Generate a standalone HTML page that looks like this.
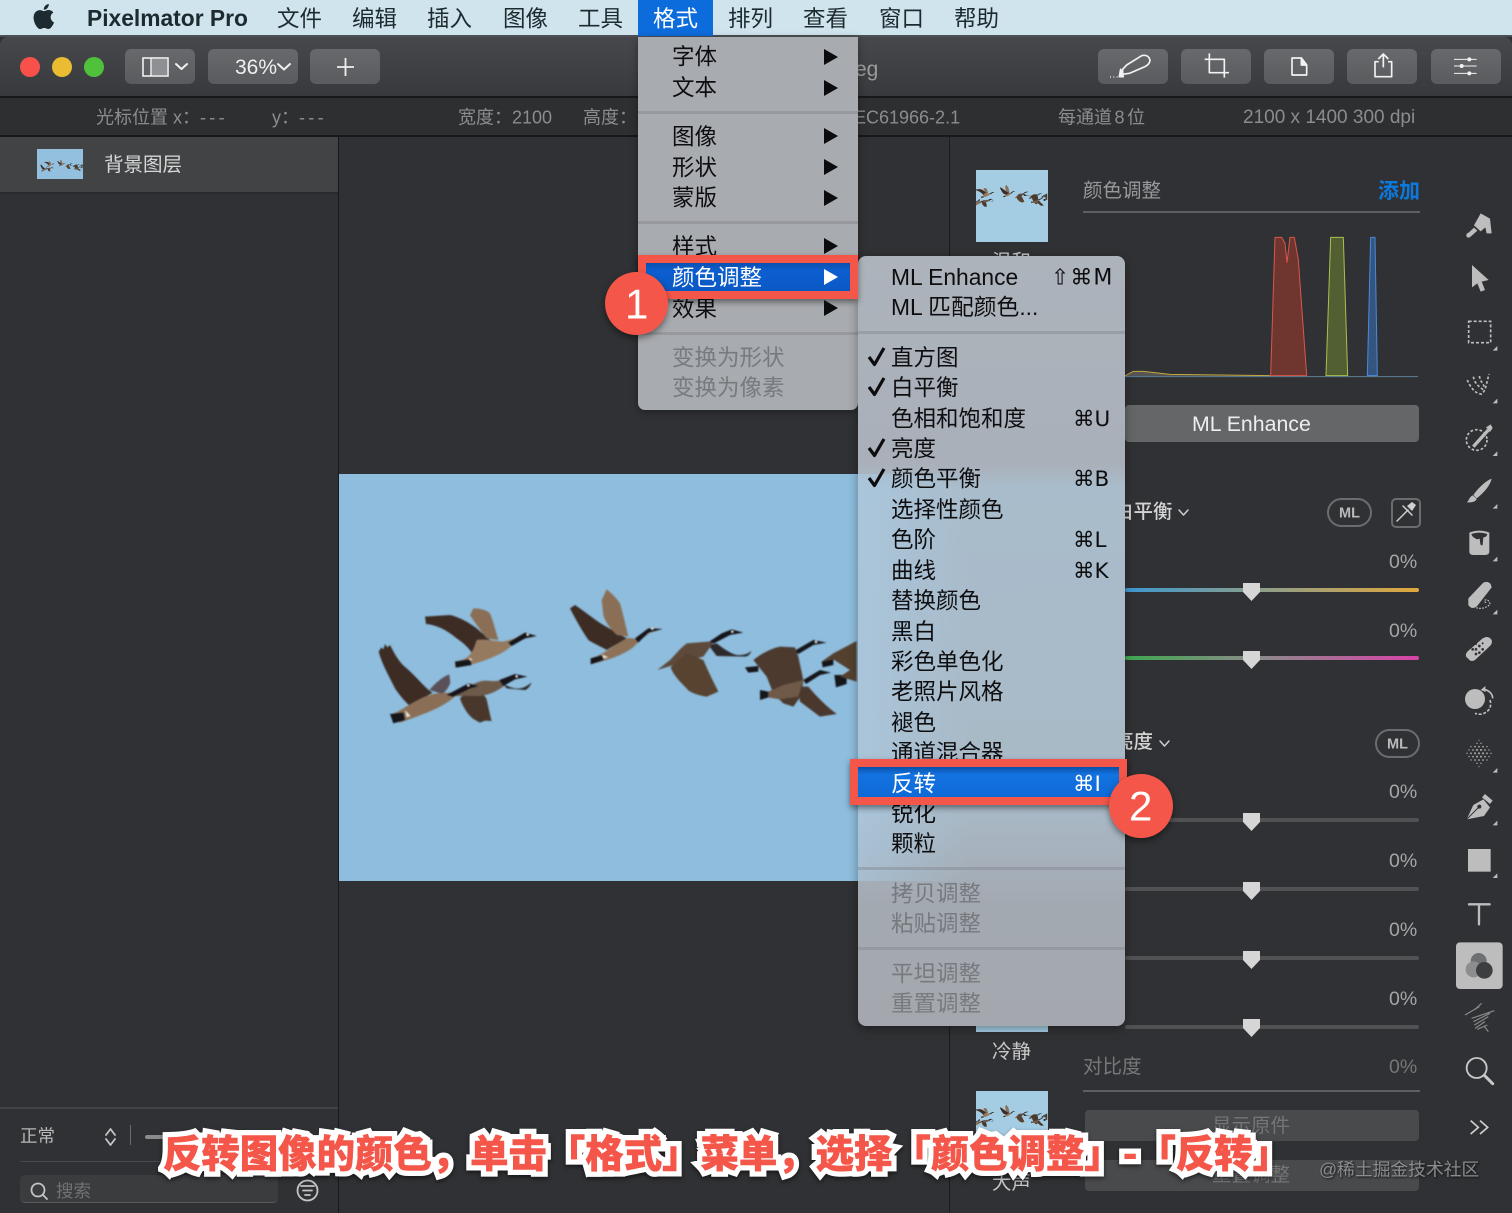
<!DOCTYPE html>
<html lang="zh"><head><meta charset="utf-8"><title>Pixelmator Pro</title>
<style>
html,body{margin:0;padding:0;background:#2f3032}
#p{position:relative;width:1512px;height:1213px;overflow:hidden;background:#303134;font-family:"Liberation Sans","Noto Sans CJK SC",sans-serif}
.a{position:absolute}
.t{position:absolute;white-space:nowrap;line-height:1;transform:translateY(calc(-50% + 1.5px))}
.mb{font-size:22.5px;color:#1d2a30;top:18px}
.s{font-size:18px;color:#8b8c8e;top:116px}
.btn{position:absolute;top:49px;height:35px;border-radius:6px;background:linear-gradient(#67696c,#595b5e)}
.m{font-size:22.5px;color:#0e0e10}
.k{font-family:"DejaVu Sans","Liberation Sans",sans-serif;font-size:21.5px;left:1073px}
.d{color:#777a7e}
.pc{font-size:19.500px;color:#a5a6a7;left:1389px}
.tr{position:absolute;left:1125px;width:294px;height:4px;border-radius:2px;background:#515254}
.sep{position:absolute;height:3px;background:rgba(125,128,134,.4)}
.ds{letter-spacing:3.300px}
.cap{left:163px;top:1150px;font-size:38.400px;font-weight:900;color:#f4574a;font-family:"Noto Sans CJK SC",sans-serif}
</style></head><body><div id="p">

<!-- menu bar -->
<div class="a" style="left:0;top:0;width:1512px;height:36px;background:#cfe4ed"></div>
<div class="a" style="left:0;top:35px;width:1512px;height:2px;background:#4a5054"></div>
<span class="t" style="left:87px;top:17px;font-size:22.800px;font-weight:bold;color:#1d2a30">Pixelmator Pro</span>
<span class="t mb" style="left:277px">文件</span><span class="t mb" style="left:352px">编辑</span><span class="t mb" style="left:427px">插入</span><span class="t mb" style="left:503px">图像</span><span class="t mb" style="left:578px">工具</span><span class="t mb" style="left:728px">排列</span><span class="t mb" style="left:803px">查看</span><span class="t mb" style="left:879px">窗口</span><span class="t mb" style="left:954px">帮助</span>

<!-- toolbar -->
<div class="a" style="left:0;top:37px;width:1512px;height:60px;border-radius:8px 8px 0 0;background:linear-gradient(#46484b,#37393c)"></div>
<div class="a" style="left:0;top:96px;width:1512px;height:2px;background:#17181a"></div>
<div class="a" style="left:0;top:98px;width:1512px;height:37px;background:#2e2f31"></div>
<div class="a" style="left:0;top:135px;width:1512px;height:2px;background:#17181a"></div>
<div class="a" style="left:20px;top:57px;width:20px;height:20px;border-radius:50%;background:#f8514c"></div>
<div class="a" style="left:52px;top:57px;width:20px;height:20px;border-radius:50%;background:#e9bc32"></div>
<div class="a" style="left:84px;top:57px;width:20px;height:20px;border-radius:50%;background:#50c13b"></div>
<div class="btn" style="left:125px;width:70px"></div>
<div class="btn" style="left:208px;width:90px"></div>
<div class="btn" style="left:310px;width:70px"></div>
<div class="btn" style="left:1098px;width:70px"></div>
<div class="btn" style="left:1181px;width:70px"></div>
<div class="btn" style="left:1264px;width:70px"></div>
<div class="btn" style="left:1347px;width:70px"></div>
<div class="btn" style="left:1431px;width:70px"></div>
<span class="t" style="left:235px;top:66px;font-size:21px;color:#f0f0f0">36%</span>
<span class="t" style="left:855px;top:68px;font-size:21px;color:#9a9b9c">eg</span>

<!-- status -->
<span class="t s" style="left:96px">光标位置 x：<span class="ds">---</span></span>
<span class="t s" style="left:272px">y：<span class="ds">---</span></span>
<span class="t s" style="left:458px">宽度：2100</span>
<span class="t s" style="left:583px">高度：</span>
<span class="t s" style="left:854px">EC61966-2.1</span>
<span class="t s" style="left:1058px;word-spacing:-2.500px">每通道 8 位</span>
<span class="t s" style="left:1243px;font-size:19px">2100 x 1400 300 dpi</span>

<!-- left panel -->
<div class="a" style="left:0;top:137px;width:338px;height:1076px;background:#303134"></div>
<div class="a" style="left:0;top:137px;width:338px;height:55px;background:#424345"></div>
<div class="a" style="left:338px;top:137px;width:1px;height:1076px;background:#17181a"></div>
<div class="a" style="left:949px;top:137px;width:1px;height:1076px;background:#1b1c1e"></div>
<div class="a" style="left:0;top:192px;width:338px;height:2px;background:#2a2b2d"></div>
<span class="t" style="left:104px;top:164px;font-size:19.500px;color:#d8d8d8">背景图层</span>
<div class="a" style="left:0;top:1107px;width:338px;height:2px;background:#424345"></div>
<span class="t" style="left:20px;top:1135px;font-size:17.500px;color:#b8b8b8">正常</span>
<div class="a" style="left:130px;top:1125px;width:1px;height:20px;background:#6a6b6d"></div>
<div class="a" style="left:145px;top:1135px;width:40px;height:4px;background:#8a8b8c;border-radius:2px"></div>
<div class="a" style="left:20px;top:1161px;width:300px;height:1px;background:#47484a"></div>
<div class="a" style="left:20px;top:1175px;width:258px;height:28px;border-radius:5px;background:#3b3c3e;border-bottom:1px solid #5a5b5d;box-sizing:border-box"></div>
<span class="t" style="left:56px;top:1190px;font-size:17.500px;color:#707173">搜索</span>

<!-- canvas image -->
<div class="a" style="left:339px;top:474px;width:520px;height:407px;background:#8fbddd"></div>

<!-- right panel -->
<div class="a" style="left:976px;top:170px;width:72px;height:72px;background:#a4cde4"></div>
<div class="a" style="left:976px;top:1010px;width:72px;height:22px;background:#a4cde4"></div>
<div class="a" style="left:976px;top:1091px;width:72px;height:60px;background:#a4cde4"></div>
<span class="t" style="left:992px;top:1051px;font-size:19.500px;color:#c8c8c8">冷静</span>
<span class="t" style="left:992px;top:1182px;font-size:19.500px;color:#c8c8c8">大声</span>
<span class="t" style="left:992px;top:261px;font-size:19.500px;color:#c8c8c8">温和</span>
<span class="t" style="left:1083px;top:190px;font-size:19.500px;color:#98999b">颜色调整</span>
<span class="t" style="left:1378px;top:190px;font-size:21px;font-weight:bold;color:#0b79de">添加</span>
<div class="a" style="left:1083px;top:211px;width:337px;height:2px;background:#5e5f61"></div>
<div class="a" style="left:1125px;top:405px;width:294px;height:37px;border-radius:4px;background:#646668"></div>
<span class="t" style="left:1192px;top:423px;font-size:21.300px;color:#eee">ML Enhance</span>

<span class="t" style="left:1114px;top:511px;font-size:19.500px;color:#d4d4d4;font-weight:500">白平衡</span>
<span class="t" style="left:1114px;top:741px;font-size:19.500px;color:#d4d4d4;font-weight:500">亮度</span>
<div class="a" style="left:1327px;top:498px;width:45px;height:29px;border:2px solid #6b6c6e;border-radius:15px;box-sizing:border-box"></div>
<span class="t" style="left:1339px;top:512px;font-size:14.500px;font-weight:bold;color:#bbb">ML</span>
<div class="a" style="left:1391px;top:498px;width:30px;height:30px;border:2px solid #6b6c6e;border-radius:5px;box-sizing:border-box"></div>
<div class="a" style="left:1375px;top:729px;width:45px;height:29px;border:2px solid #6b6c6e;border-radius:15px;box-sizing:border-box"></div>
<span class="t" style="left:1387px;top:743px;font-size:14.500px;font-weight:bold;color:#bbb">ML</span>

<span class="t pc" style="top:561px">0%</span><span class="t pc" style="top:630px">0%</span><span class="t pc" style="top:791px">0%</span><span class="t pc" style="top:860px">0%</span><span class="t pc" style="top:929px">0%</span><span class="t pc" style="top:998px">0%</span><span class="t pc" style="top:1066px;color:#777">0%</span>
<div class="tr" style="top:588px;background:linear-gradient(90deg,#3d98cf,#8a9d8d 45%,#e0a83c)"></div>
<div class="tr" style="top:656px;background:linear-gradient(90deg,#3fa84e,#8b8b8b 45%,#d843a8)"></div>
<div class="tr" style="top:818px"></div><div class="tr" style="top:887px"></div><div class="tr" style="top:956px"></div><div class="tr" style="top:1025px"></div>
<span class="t" style="left:1083px;top:1066px;font-size:19.500px;color:#77787a">对比度</span>
<div class="a" style="left:1083px;top:1090px;width:337px;height:2px;background:#5e5f61"></div>
<div class="a" style="left:1085px;top:1110px;width:334px;height:31px;border-radius:4px;background:#494a4c"></div>
<div class="a" style="left:1085px;top:1160px;width:334px;height:31px;border-radius:4px;background:#494a4c"></div>
<span class="t" style="left:1212px;top:1125px;font-size:19.500px;color:#747577">显示原件</span>
<span class="t" style="left:1212px;top:1174px;font-size:19.500px;color:#747577">重置调整</span>

<!-- base vector layer -->
<svg class="a" style="left:0;top:0" width="1512" height="1213" viewBox="0 0 1512 1213">
<defs>
<g id="geese">
<g fill="#3c2c24">
<path d="M116 275L124 262L130 268L135 252L142 262L150 255C165 285 180 310 200 325C230 350 255 385 278 398C255 412 230 425 208 436C190 420 175 400 165 385C145 345 125 310 116 275Z"/>
<path d="M268 390C285 370 305 352 328 343L331 368C325 385 315 395 308 402Z" fill="#5a5058"/>
<path d="M360 415C375 400 390 388 400 385C420 395 435 405 440 418C445 440 450 465 455 483L435 482L420 488C405 480 395 475 385 462C372 445 365 430 360 415Z" fill="#4a372c"/>
<path d="M255 170L330 165C360 172 390 190 410 205L450 240L400 285C385 260 365 245 350 235C320 210 290 195 258 192Z"/>
<path d="M690 145L705 135C735 155 765 180 790 195L860 235L800 270C780 258 760 250 745 240C725 210 705 175 690 145Z"/>
<path d="M1105 255L1130 250C1150 265 1170 280 1190 285C1210 287 1225 282 1235 272C1230 285 1222 290 1215 290L1130 288Z" fill="#2e2a2c"/>
<path d="M490 372C505 380 525 388 540 385C555 383 565 375 575 367C570 380 562 388 555 390L500 385Z" fill="#2e2a2c"/>
</g>
<g fill="#8a6f56">
<path d="M390 165L400 145C420 145 440 150 450 160C460 185 468 215 475 240L440 235C425 215 405 190 390 165Z"/>
<path d="M785 120L800 88C815 100 830 115 840 130C850 165 858 200 865 230L830 225C810 205 795 185 790 165Z"/>
<path d="M345 305C380 298 395 290 410 240C440 235 470 245 490 245L525 235L555 218L590 228L555 235L520 252C500 275 460 295 400 312L345 322Z" fill="#957a60"/>
<path d="M752 295C790 285 830 250 860 235C880 232 885 240 890 235L925 205L968 207L930 218L895 245C880 270 830 295 755 312Z" fill="#8d7258"/>
<path d="M150 465C190 450 230 415 270 405C300 395 320 402 345 395L385 372L412 378L385 385C360 395 345 410 325 425C290 450 230 470 180 488Z"/>
<path d="M952 330L990 300C1005 285 1020 265 1040 250L1105 245L1120 248L1090 290L1050 300Z" fill="#5e4a3b"/>
<path d="M992 322C1010 305 1025 292 1040 280L1090 300C1105 335 1120 365 1135 395L1100 410C1070 405 1045 395 1040 385C1020 365 1000 345 992 322Z" fill="#57432f"/>
<path d="M340 408C370 390 410 360 440 362C465 365 480 362 490 358L492 378C470 395 445 405 420 408Z" fill="#6e5a49"/>
</g>
<g fill="#15151a">
<path d="M320 405L385 370L415 378L390 385L340 410Z"/><path d="M478 360L525 342L562 350L525 358L490 378Z"/>
<path d="M505 248L555 218L590 228L555 235L515 258Z"/><path d="M885 235L925 205L968 207L925 218L895 248Z"/>
<path d="M1108 245L1145 220L1175 208L1210 218L1170 225L1122 250Z"/><path d="M1365 272L1420 240L1460 248L1420 255L1375 282Z"/>
<path d="M1390 360L1440 330L1473 338L1440 345L1398 372Z"/>
<path d="M150 462L190 458L195 480L160 490Z"/><path d="M345 305L390 298L395 315L348 323Z"/><path d="M752 295L790 285L790 300L752 313Z"/>
<path d="M1215 322L1255 318L1255 335L1225 338Z"/><path d="M1445 305L1480 298L1480 315L1448 322Z"/><path d="M1483 345L1520 345L1520 372L1488 382Z"/><path d="M1260 390L1285 395L1285 412L1260 420Z"/>
</g>
<g fill="#e8e2d8"><circle cx="385" cy="376" r="4"/><circle cx="530" cy="349" r="4"/><circle cx="563" cy="224" r="4"/><circle cx="937" cy="206" r="4"/><circle cx="1177" cy="215" r="4"/><circle cx="1428" cy="246" r="4"/><path d="M195 450L212 468L200 472Z"/><path d="M388 292L398 300L388 302Z"/><path d="M785 283L805 292L790 296Z"/></g>
<path d="M1240 300C1265 280 1295 265 1320 260L1365 262L1375 290L1390 360L1385 405L1360 440L1330 430L1300 400L1280 350Z" fill="#4c3a2f"/>
<path d="M1375 380L1405 380C1430 410 1460 440 1490 462L1440 470L1380 425Z" fill="#4a382d"/>
<path d="M1285 395L1330 375L1390 360L1375 410L1320 418L1285 412Z" fill="#6f5947"/>
<path d="M1445 305L1480 280L1550 243L1550 365L1500 350L1530 330L1480 298Z" fill="#54402f"/>
</g>
</defs>
<g style="filter:blur(.7px)">
<g transform="translate(340 560) scale(.33333)"><use href="#geese"/></g>
</g>
<!-- thumbs -->
<clipPath id="c1"><rect x="976" y="170" width="72" height="72"/></clipPath>
<clipPath id="c2"><rect x="976" y="1091" width="72" height="60"/></clipPath>
<clipPath id="c3"><rect x="37" y="149" width="46" height="30"/></clipPath>
<rect x="37" y="149" width="46" height="30" fill="#93c0de"/>
<g clip-path="url(#c3)"><g transform="translate(37 157) scale(.0295)"><use href="#geese"/></g></g>
<g clip-path="url(#c1)"><g transform="translate(962 180) scale(.055)"><use href="#geese"/></g></g>
<g clip-path="url(#c2)"><g transform="translate(962 1100) scale(.055)"><use href="#geese"/></g></g>

<!-- apple -->
<path transform="translate(29 2) scale(1.27)" fill="#1d2a30" d="M17.05 12.04c-.03-2.5 2.04-3.7 2.13-3.76-1.16-1.7-2.97-1.93-3.61-1.96-1.54-.16-3 .9-3.78.9-.78 0-1.98-.88-3.26-.86-1.68.03-3.22.98-4.09 2.48-1.74 3.03-.45 7.5 1.25 9.95.83 1.2 1.82 2.55 3.12 2.5 1.25-.05 1.73-.81 3.24-.81 1.51 0 1.94.81 3.27.78 1.35-.02 2.2-1.22 3.02-2.43.95-1.39 1.34-2.74 1.37-2.81-.03-.01-2.63-1.01-2.66-4zM14.56 4.7c.69-.84 1.16-2 1.03-3.17-1 .04-2.2.67-2.91 1.5-.64.74-1.2 1.92-1.05 3.06 1.11.09 2.25-.57 2.93-1.39z"/>

<!-- toolbar left icons -->
<rect x="143" y="58" width="25" height="18" fill="none" stroke="#f0f0f0" stroke-width="1.600"/>
<rect x="151" y="59" width="16" height="16" fill="#8e9093"/><path d="M151 58V76" stroke="#f0f0f0" stroke-width="1.400"/>
<g fill="none" stroke="#f0f0f0" stroke-width="2" stroke-linecap="round" stroke-linejoin="round">
<path d="M176 64L181.500 69L187 64"/><path d="M278 64L284 69.500L290 64"/>
</g>
<path d="M337 67H354M345.500 58V76" stroke="#f0f0f0" stroke-width="1.800"/>

<!-- toolbar right icons -->
<g transform="translate(1080 30) scale(.33333)" fill="none" stroke="#f2f2f2" stroke-width="5" stroke-linejoin="round">
<path d="M128 118L140 105L185 77Q205 72 210 90Q210 102 195 110L148 130L128 133Z"/>
<path d="M122 118L130 140L118 140Z" fill="#f2f2f2"/>
<path d="M90 141H93M100 141H103M110 141H113" stroke-width="4"/>
<path d="M388 70V128H447M374 88H433V143"/>
<path d="M636 84H664L680 105V135H636Z"/><path d="M664 84L680 105H664Z" fill="#f2f2f2"/>
<path d="M896 95H885V140H935V95H924M910 112V72M895 87L910 72L925 87"/>
<path d="M1122 88H1190M1122 108H1190M1122 130H1190" stroke-width="3"/>
<circle cx="1168" cy="88" r="6" fill="#f2f2f2" stroke="none"/><circle cx="1145" cy="108" r="6" fill="#f2f2f2" stroke="none"/><circle cx="1168" cy="130" r="6" fill="#f2f2f2" stroke="none"/>
</g>

<!-- histogram -->
<g transform="translate(1080 30) scale(.33333)">
<path d="M572 1037L585 622H605L615 640L621 698L630 622H643L655 690L680 1037Z" fill="#6e362e" stroke="#d9574a" stroke-width="3"/>
<path d="M738 1037L752 622H790L803 1037Z" fill="#515f33" stroke="#a8c050" stroke-width="3"/>
<path d="M862 1037L872 622H885L892 1037Z" fill="#33557f" stroke="#4b8ad8" stroke-width="3"/>
<path d="M135 1038L160 1024L190 1024L270 1033L570 1037" fill="#555" stroke="#c6a93e" stroke-width="3"/>
<path d="M135 1040H1014" stroke="#5f7f96" stroke-width="3"/>
</g>

<!-- slider thumbs -->
<g fill="#d6d6d6">
<path d="M1243 583H1260V592L1251.500 601L1243 592Z"/>
<path d="M1243 651H1260V660L1251.500 669L1243 660Z"/>
<path d="M1243 813H1260V822L1251.500 831L1243 822Z"/>
<path d="M1243 882H1260V891L1251.500 900L1243 891Z"/>
<path d="M1243 951H1260V960L1251.500 969L1243 960Z"/>
<path d="M1243 1019H1260V1028L1251.500 1037L1243 1028Z"/>
</g>
<g fill="none" stroke="#cfcfcf" stroke-width="1.500" stroke-linecap="round" stroke-linejoin="round">
<path d="M1179 510L1183.500 515L1188 510"/><path d="M1160 741L1164.500 746L1169 741"/>
<path d="M1397 521L1408 510M1403 506L1412 515M1397 521L1399 519"/>
</g>
<path d="M1407 506L1412 502L1416 505L1412 511Z" fill="#d0d0d0"/>

<!-- bottom left icons -->
<g fill="none" stroke="#c4c4c4" stroke-width="1.800" stroke-linecap="round" stroke-linejoin="round">
<path d="M106 1135L110.500 1129L115 1135M106 1139L110.500 1145L115 1139"/>
<circle cx="38" cy="1190" r="6.500"/><path d="M43 1195L47 1199"/>
<circle cx="307.500" cy="1190.500" r="10"/><path d="M301 1186H314M303 1190.500H312M305 1195H310"/>
</g>

<!-- tools column 1 -->
<g transform="translate(1440 190) scale(.33333)">
<g fill="#bdbdbd">
<path d="M122 70L150 86L155 130L140 130L136 112L122 124L102 106Z"/><path d="M102 113L112 122L94 138Q84 148 79 138Q78 130 86 128Z"/>
<path d="M96 225L146 270L125 275L135 300L122 305L112 280L96 292Z"/>
<path d="M150 868C130 878 110 900 100 915L110 925C130 910 150 888 155 866Z"/><path d="M98 916C86 922 88 932 80 937C100 938 112 932 109 925Z"/>
<path d="M88 1028Q118 1016 148 1028V1085Q148 1095 135 1095H100Q88 1095 88 1085Z"/>
<path d="M85 1225L130 1178Q142 1172 152 1182L155 1192L110 1250Q95 1260 85 1245Z"/>
<path d="M84 1405Q72 1398 82 1385L128 1345Q145 1335 155 1350Q158 1360 150 1368L105 1410Q93 1418 84 1405Z"/>
<path d="M158 482L172 468V482Z"/><path d="M158 640L172 626V640Z"/><path d="M158 798L172 784V798Z"/><path d="M158 956L172 942V956Z"/><path d="M158 1114L172 1100V1114Z"/><path d="M158 1273L172 1259V1273Z"/>
</g>
<path d="M94 1032Q118 1024 142 1032Q140 1042 130 1042L128 1064Q124 1070 121 1062L119 1046Q110 1050 104 1044Q96 1040 94 1032Z" fill="#303134"/>
<g fill="none" stroke="#bdbdbd" stroke-width="5">
<rect x="86" y="394" width="66" height="64" stroke-dasharray="9 6"/>
<path d="M82 570C90 590 105 612 125 612C140 600 140 570 148 552M100 560C105 585 120 590 130 600M118 558C122 575 128 580 133 590" stroke-dasharray="8 6"/>
<circle cx="110" cy="750" r="31" stroke-dasharray="8 6"/>
<path d="M145 720L100 770" stroke-width="10"/>
<path d="M138 1238C125 1232 145 1220 150 1242C140 1256 115 1258 108 1252" stroke-dasharray="5 4" stroke-width="3.500"/>
</g>
<path d="M138 712L152 703L158 714L150 726Z" fill="#bdbdbd"/>
<g fill="#303134"><circle cx="108" cy="1378" r="4"/><circle cx="118" cy="1368" r="4"/><circle cx="128" cy="1378" r="4"/><circle cx="118" cy="1388" r="4"/><circle cx="108" cy="1362" r="3"/><circle cx="98" cy="1378" r="4"/><circle cx="108" cy="1392" r="4"/><circle cx="128" cy="1360" r="3"/></g>
</g>

<!-- tools column 2 -->
<g transform="translate(1440 670) scale(.33333)">
<circle cx="105" cy="87" r="30" fill="#bdbdbd"/>
<g fill="none" stroke="#bdbdbd" stroke-width="5"><path d="M132 58C148 62 158 72 158 85"/><path d="M150 90C160 120 130 140 105 130" stroke-dasharray="9 5"/></g>
<path d="M122 60L136 48L137 66Z" fill="#bdbdbd"/>
<g fill="#a2a2a2">
<circle cx="117" cy="250" r="3.200"/><circle cx="105" cy="250" r="3.200"/><circle cx="129" cy="250" r="3.200"/><circle cx="93" cy="250" r="2.800"/><circle cx="141" cy="250" r="2.800"/><circle cx="81" cy="250" r="2.200"/><circle cx="153" cy="250" r="2.200"/>
<circle cx="111" cy="240" r="3.200"/><circle cx="123" cy="240" r="3.200"/><circle cx="99" cy="240" r="2.800"/><circle cx="135" cy="240" r="2.800"/><circle cx="87" cy="240" r="2.200"/><circle cx="147" cy="240" r="2.200"/>
<circle cx="111" cy="260" r="3.200"/><circle cx="123" cy="260" r="3.200"/><circle cx="99" cy="260" r="2.800"/><circle cx="135" cy="260" r="2.800"/><circle cx="87" cy="260" r="2.200"/><circle cx="147" cy="260" r="2.200"/>
<circle cx="117" cy="230" r="2.800"/><circle cx="105" cy="230" r="2.800"/><circle cx="129" cy="230" r="2.800"/><circle cx="93" cy="230" r="2.200"/><circle cx="141" cy="230" r="2.200"/>
<circle cx="117" cy="270" r="2.800"/><circle cx="105" cy="270" r="2.800"/><circle cx="129" cy="270" r="2.800"/><circle cx="93" cy="270" r="2.200"/><circle cx="141" cy="270" r="2.200"/>
<circle cx="111" cy="220" r="2.200"/><circle cx="123" cy="220" r="2.200"/><circle cx="111" cy="280" r="2.200"/><circle cx="123" cy="280" r="2.200"/><circle cx="117" cy="211" r="1.800"/><circle cx="117" cy="290" r="1.800"/>
</g>
<path d="M80 448L100 405L130 388L150 412L132 438Z" fill="#bdbdbd"/>
<path d="M135 372L158 392L150 402L126 382Z" fill="#bdbdbd"/>
<path d="M80 448L118 410" stroke="#303134" stroke-width="3"/><circle cx="118" cy="410" r="6" fill="#303134"/>
<rect x="84" y="537" width="68" height="68" fill="#bdbdbd"/>
<path d="M158 624L172 610V624Z" fill="#bdbdbd"/><path d="M158 466L172 452V466Z" fill="#bdbdbd"/><path d="M158 308L172 294V308Z" fill="#bdbdbd"/>
<path d="M87 703H149M117 703V763" stroke="#bdbdbd" stroke-width="7" fill="none" stroke-linecap="round"/>
<rect x="48" y="817" width="140" height="140" rx="12" fill="#bdbdbd"/>
<circle cx="116" cy="873" r="24" fill="#6f7072"/><circle cx="101" cy="898" r="24" fill="#8c8d8f"/><circle cx="133" cy="901" r="25" fill="#3d3e40"/>
<g stroke="#8a8a8a" stroke-width="3.500"><path d="M75 1035L118 1010"/><path d="M95 1045L163 1022"/><path d="M100 1055L150 1030"/><path d="M103 1065L145 1040"/><path d="M105 1075L135 1055"/><path d="M112 1078L142 1065"/><path d="M105 1018L125 1000"/><path d="M132 1068L145 1085"/></g>
<circle cx="110" cy="1194" r="30" fill="none" stroke="#c8c8c8" stroke-width="5.500"/>
<path d="M133 1216L158 1241" stroke="#c8c8c8" stroke-width="9" stroke-linecap="round"/>
<path d="M92 1352L115 1372L92 1392M120 1352L143 1372L120 1392" fill="none" stroke="#cfcfcf" stroke-width="5"/>
</g>
</svg>

<!-- 格式 menu -->
<div class="a" style="left:638px;top:0;width:75px;height:36px;background:#0d6cdc"></div>
<span class="t mb" style="left:653px;color:#fff">格式</span>
<div class="a" style="left:638px;top:37px;width:220px;height:373px;border-radius:0 0 7px 7px;background:#a8abaf;box-shadow:0 2px 8px rgba(0,0,0,.35)"></div>
<div class="sep" style="left:638px;top:111px;width:220px"></div>
<div class="sep" style="left:638px;top:221px;width:220px"></div>
<div class="sep" style="left:638px;top:332px;width:220px"></div>
<span class="t m" style="left:672px;top:56px">字体</span><span class="t m" style="left:672px;top:87px">文本</span><span class="t m" style="left:672px;top:136px">图像</span><span class="t m" style="left:672px;top:167px">形状</span><span class="t m" style="left:672px;top:197px">蒙版</span><span class="t m" style="left:672px;top:246px">样式</span><span class="t m" style="left:672px;top:308px">效果</span>
<span class="t m d" style="left:672px;top:357px">变换为形状</span><span class="t m d" style="left:672px;top:387px">变换为像素</span>

<!-- submenu -->
<div class="a" style="left:858px;top:256px;width:267px;height:770px;border-radius:8px;overflow:hidden;background:linear-gradient(#adb3bb 0,#a9b0b9 27%,#a9bccb 30%,#a9b9c6 72%,#a3a9b1 84%,#a4a8ae 100%);box-shadow:0 3px 10px rgba(0,0,0,.35)">
<div class="a" style="left:0;top:218px;width:110px;height:407px;background:linear-gradient(90deg,rgba(170,210,240,.45),rgba(170,210,240,0))"></div>
</div>
<div class="sep" style="left:858px;top:331px;width:267px"></div>
<div class="sep" style="left:858px;top:867px;width:267px"></div>
<div class="sep" style="left:858px;top:947px;width:267px"></div>
<span class="t m" style="left:891px;top:276px;font-size:22.800px">ML Enhance</span>
<span class="t m" style="left:891px;top:306px;font-size:22.800px">ML 匹配颜色...</span>
<span class="t m k" style="left:1051px;top:277px;font-size:22px;letter-spacing:1px">⇧⌘M</span>
<span class="t m" style="left:891px;top:357px">直方图</span><span class="t m" style="left:891px;top:387px">白平衡</span><span class="t m" style="left:891px;top:418px">色相和饱和度</span><span class="t m" style="left:891px;top:448px">亮度</span><span class="t m" style="left:891px;top:478px">颜色平衡</span><span class="t m" style="left:891px;top:509px">选择性颜色</span><span class="t m" style="left:891px;top:539px">色阶</span><span class="t m" style="left:891px;top:570px">曲线</span><span class="t m" style="left:891px;top:600px">替换颜色</span><span class="t m" style="left:891px;top:631px">黑白</span><span class="t m" style="left:891px;top:661px">彩色单色化</span><span class="t m" style="left:891px;top:691px">老照片风格</span><span class="t m" style="left:891px;top:722px">褪色</span><span class="t m" style="left:891px;top:752px">通道混合器</span><span class="t m" style="left:891px;top:813px">锐化</span><span class="t m" style="left:891px;top:843px">颗粒</span>
<span class="t m d" style="left:891px;top:893px">拷贝调整</span><span class="t m d" style="left:891px;top:923px">粘贴调整</span><span class="t m d" style="left:891px;top:973px">平坦调整</span><span class="t m d" style="left:891px;top:1003px">重置调整</span>
<span class="t m k" style="top:418px">⌘U</span>
<span class="t m k" style="top:478px">⌘B</span>
<span class="t m k" style="top:539px">⌘L</span>
<span class="t m k" style="top:570px">⌘K</span>

<!-- red box 1 -->
<div class="a" style="left:638px;top:255px;width:220px;height:44px;box-sizing:border-box;border:8px solid #f4574a;background:linear-gradient(#0a4fb0,#0c5fd0 30%,#0a58c4);box-shadow:0 3px 6px rgba(0,0,0,.45)"></div>
<span class="t m" style="left:672px;top:277px;color:#fff">颜色调整</span>
<!-- red box 2 -->
<div class="a" style="left:850px;top:759px;width:277px;height:46px;box-sizing:border-box;border:8px solid #f4574a;background:linear-gradient(#0a4fa8,#1273e0 25%,#0f6ad8);box-shadow:0 3px 6px rgba(0,0,0,.45)"></div>
<span class="t m" style="left:891px;top:783px;color:#fff">反转</span>
<span class="t m k" style="top:783px;color:#fff">⌘I</span>

<svg class="a" style="left:0;top:0" width="1512" height="1213" viewBox="0 0 1512 1213">
<g fill="#0c0c0e">
<path d="M824 49L838 57L824 65Z"/><path d="M824 80L838 88L824 96Z"/><path d="M824 128L838 136L824 144Z"/><path d="M824 159L838 167L824 175Z"/><path d="M824 190L838 198L824 206Z"/><path d="M824 238L838 246L824 254Z"/><path d="M824 300L838 308L824 316Z"/>
</g>
<path d="M824 269L838 277L824 285Z" fill="#fff"/>
<path d="M869 357L874.500 364.500L884 348M869 387L874.500 394.500L884 378M869 448L874.500 455.500L884 439M869 478L874.500 485.500L884 469" fill="none" stroke="#0c0c0e" stroke-width="3.200" stroke-linejoin="round"/>
</svg>

<!-- circles -->
<div class="a" style="left:605px;top:272px;width:63px;height:63px;border-radius:50%;background:#f4574a;box-shadow:0 3px 7px rgba(0,0,0,.45)"></div>
<span class="t" style="left:625px;top:303px;font-size:42px;color:#fff">1</span>
<div class="a" style="left:1109px;top:774px;width:64px;height:64px;border-radius:50%;background:#f4574a;box-shadow:0 3px 7px rgba(0,0,0,.45)"></div>
<span class="t" style="left:1129px;top:805px;font-size:42px;color:#fff">2</span>

<!-- watermark -->
<span class="t" style="left:1319px;top:1169px;font-size:17.800px;color:#8b8c8e;text-shadow:1px 1px 2px #111">@稀土掘金技术社区</span>

<!-- caption -->
<span class="t cap" style="-webkit-text-stroke:11px #fff;paint-order:stroke fill;filter:drop-shadow(0 2px 2px rgba(0,0,0,.55))">反转图像的颜色，单击「格式」菜单，选择「颜色调整」-「反转」</span>
<span class="t cap" aria-hidden="true" style="-webkit-text-stroke:.5px #f4574a">反转图像的颜色，单击「格式」菜单，选择「颜色调整」-「反转」</span>
</div></body></html>
